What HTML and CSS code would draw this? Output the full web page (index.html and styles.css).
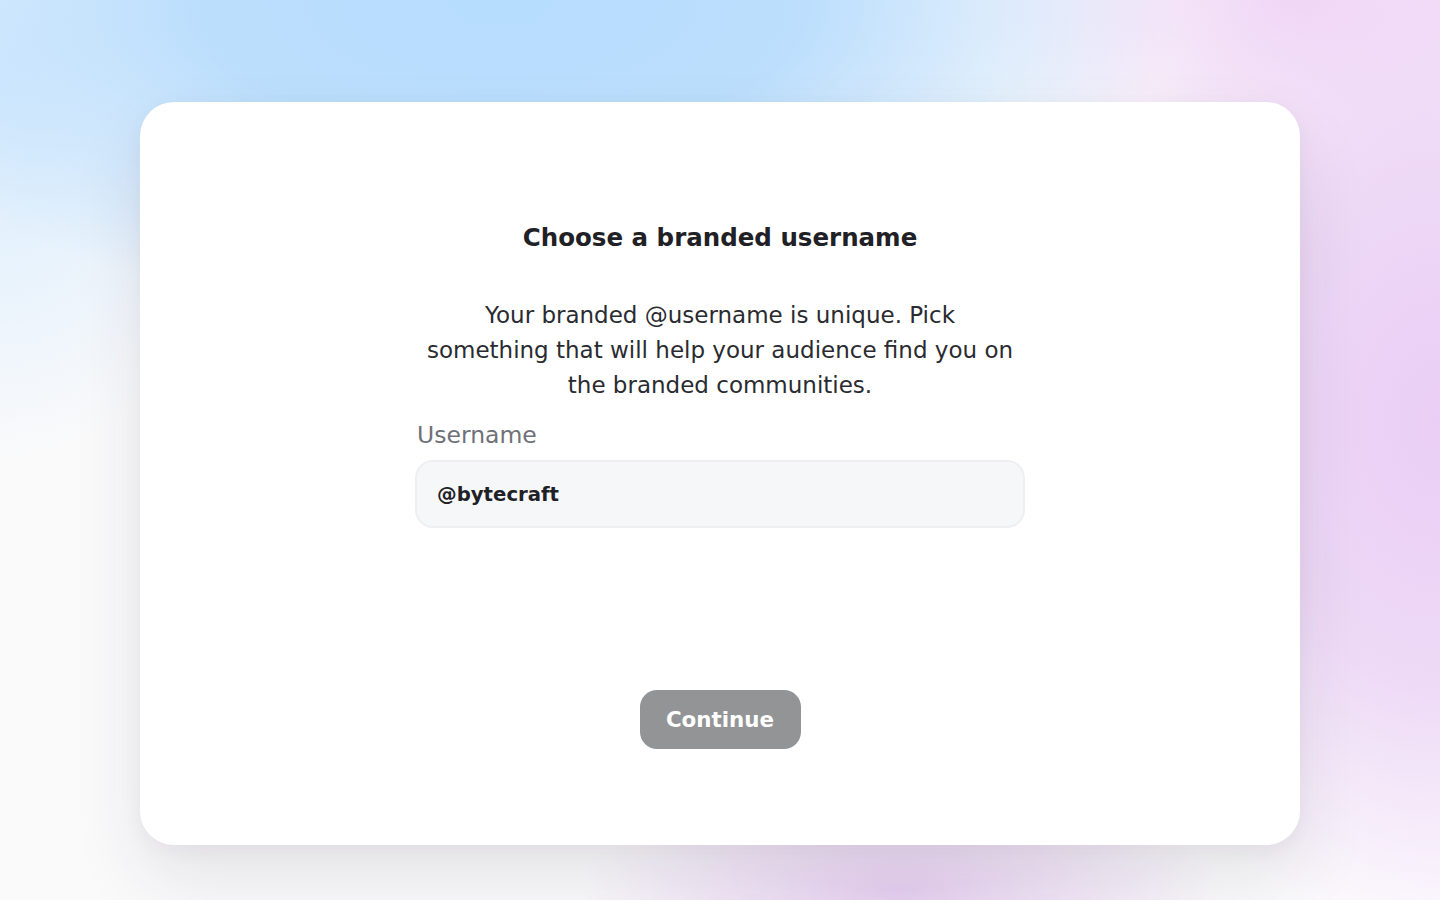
FILE: index.html
```html
<!DOCTYPE html>
<html lang="en">
<head>
<meta charset="utf-8">
<title>Choose a branded username</title>
<link rel="stylesheet" href="styles.css">
</head>
<body>
<main class="card">
  <div class="content">
    <h1 class="title">Choose a branded username</h1>
    <p class="desc">Your branded @username is unique. Pick<br>something that will help your audience find you on<br>the branded communities.</p>
    <label class="field">
      <span class="label">Username</span>
      <input class="input" type="text" value="@bytecraft">
    </label>
  </div>
  <button class="btn" type="button">Continue</button>
</main>
</body>
</html>
```
FILE: styles.css
```css
* { box-sizing: border-box; }
html, body { margin: 0; height: 100%; }
body {
  font-family: "DejaVu Sans", "Noto Sans", sans-serif;
  background:
    radial-gradient(ellipse 680px 330px at 500px 0px, rgba(182,220,254,1) 0%, rgba(185,221,253,0.95) 45%, rgba(200,228,253,0) 100%),
    radial-gradient(ellipse 260px 380px at 0px 80px, rgba(214,235,253,1) 0%, rgba(214,235,253,0) 100%),
    radial-gradient(ellipse 330px 220px at 1300px 0px, rgba(240,214,246,1) 0%, rgba(240,214,246,0) 100%),
    radial-gradient(ellipse 360px 520px at 1440px 420px, rgba(234,206,245,1) 0%, rgba(234,206,245,0.75) 50%, rgba(234,206,245,0) 100%),
    radial-gradient(ellipse 320px 110px at 900px 890px, rgba(230,206,240,1) 0%, rgba(230,206,240,0) 100%),
    radial-gradient(ellipse 160px 140px at 1440px 0px, rgba(246,234,250,1) 0%, rgba(246,234,250,0) 100%),
    radial-gradient(ellipse 200px 160px at 1440px 900px, rgba(253,250,254,1) 0%, rgba(253,250,254,0) 100%),
    #fafafb;
  display: flex;
  align-items: center;
  justify-content: center;
  padding-top: 47px;
}
.card {
  width: 1160px;
  height: 743px;
  background: #ffffff;
  border-radius: 34px;
  box-shadow: 0 34px 70px rgba(40, 30, 60, 0.10), 0 6px 20px rgba(40, 30, 60, 0.04);
  display: flex;
  flex-direction: column;
  align-items: center;
  justify-content: space-between;
  padding: 118px 0 96px;
}
.content {
  width: 610px;
  display: flex;
  flex-direction: column;
  align-items: center;
}
.title {
  margin: 0;
  font-size: 24.5px;
  font-weight: 700;
  color: #1f2126;
  line-height: 36px;
}
.desc {
  margin: 42px 0 0;
  font-size: 23px;
  line-height: 35px;
  text-align: center;
  color: #2a2b30;
}
.field {
  width: 100%;
  display: flex;
  flex-direction: column;
  margin-top: 17px;
}
.label {
  font-size: 23.5px;
  line-height: 30px;
  color: #6f7178;
  padding-left: 2px;
}
.input {
  margin-top: 10px;
  height: 68px;
  border: 2px solid #efeff1;
  border-radius: 18px;
  background: #f6f7f9;
  padding: 0 20px;
  font-family: inherit;
  font-size: 19.7px;
  font-weight: 700;
  color: #1f2126;
  outline: none;
}
.btn {
  width: 161px;
  height: 59px;
  border: none;
  border-radius: 17px;
  background: #939496;
  color: #ffffff;
  font-family: inherit;
  font-size: 21.4px;
  font-weight: 700;
}
```
